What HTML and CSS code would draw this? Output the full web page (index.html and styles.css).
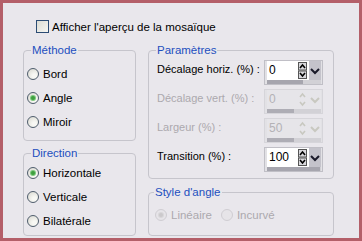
FILE: index.html
```html
<!DOCTYPE html>
<html lang="fr">
<head>
    <meta charset="UTF-8">
    <title>Mosaïque</title>
    <link rel="stylesheet" href="styles.css">
</head>
<body>

<div class="dialog">
    <!-- Preview toggle -->
    <div class="check-row">
        <span class="checkbox"></span>
        <span>Afficher l'aperçu de la mosaïque</span>
    </div>

    <div class="columns">
        <div class="col col-left">
            <fieldset class="group group-method">
                <legend>Méthode</legend>
                <div class="option"><span class="radio"></span>Bord</div>
                <div class="option"><span class="radio checked"></span>Angle</div>
                <div class="option"><span class="radio"></span>Miroir</div>
            </fieldset>

            <fieldset class="group group-direction">
                <legend>Direction</legend>
                <div class="option"><span class="radio checked"></span>Horizontale</div>
                <div class="option"><span class="radio"></span>Verticale</div>
                <div class="option"><span class="radio"></span>Bilatérale</div>
            </fieldset>
        </div>

        <div class="col col-right">
            <fieldset class="group group-params">
                <legend>Paramètres</legend>

                <div class="param-row">
                    <span class="param-label">Décalage horiz. (%) :</span>
                    <div class="spin">
                        <div class="spin-top">
                            <span class="spin-field">0</span>
                            <span class="spin-arrows"><svg width="9" height="17" viewBox="0 0 9 17"><rect x="0.5" y="0.5" width="8" height="7.5" fill="#d8d8dc" stroke="#555"/><rect x="0.5" y="9" width="8" height="7.5" fill="#d8d8dc" stroke="#555"/><path d="M2 6 L4.5 3 L7 6" fill="none" stroke="#000" stroke-width="1.6"/><path d="M2 11 L4.5 14 L7 11" fill="none" stroke="#000" stroke-width="1.6"/></svg></span>
                            <span class="spin-drop"><svg width="10" height="8" viewBox="0 0 10 8"><path d="M1 2 L5 6 L9 2" fill="none" stroke="#1a1a2a" stroke-width="2"/></svg></span>
                        </div>
                        <div class="spin-track"><span class="spin-fill" style="width: 36px"></span></div>
                    </div>
                </div>

                <div class="param-row disabled">
                    <span class="param-label">Décalage vert. (%) :</span>
                    <div class="spin">
                        <div class="spin-top">
                            <span class="spin-field">0</span>
                            <span class="spin-arrows"><svg width="9" height="17" viewBox="0 0 9 17"><path d="M2 6 L4.5 3 L7 6" fill="none" stroke="#c8c8c0" stroke-width="1.6"/><path d="M2 11 L4.5 14 L7 11" fill="none" stroke="#c8c8c0" stroke-width="1.6"/></svg></span>
                            <span class="spin-drop"><svg width="10" height="8" viewBox="0 0 10 8"><path d="M1 2 L5 6 L9 2" fill="none" stroke="#c8c8c0" stroke-width="2"/></svg></span>
                        </div>
                        <div class="spin-track"><span class="spin-fill" style="width: 27px"></span></div>
                    </div>
                </div>

                <div class="param-row disabled">
                    <span class="param-label">Largeur (%) :</span>
                    <div class="spin">
                        <div class="spin-top">
                            <span class="spin-field">50</span>
                            <span class="spin-arrows"><svg width="9" height="17" viewBox="0 0 9 17"><path d="M2 6 L4.5 3 L7 6" fill="none" stroke="#c8c8c0" stroke-width="1.6"/><path d="M2 11 L4.5 14 L7 11" fill="none" stroke="#c8c8c0" stroke-width="1.6"/></svg></span>
                            <span class="spin-drop"><svg width="10" height="8" viewBox="0 0 10 8"><path d="M1 2 L5 6 L9 2" fill="none" stroke="#c8c8c0" stroke-width="2"/></svg></span>
                        </div>
                        <div class="spin-track"><span class="spin-fill" style="width: 27px"></span></div>
                    </div>
                </div>

                <div class="param-row">
                    <span class="param-label">Transition (%) :</span>
                    <div class="spin">
                        <div class="spin-top">
                            <span class="spin-field">100</span>
                            <span class="spin-arrows"><svg width="9" height="17" viewBox="0 0 9 17"><rect x="0.5" y="0.5" width="8" height="7.5" fill="#d8d8dc" stroke="#555"/><rect x="0.5" y="9" width="8" height="7.5" fill="#d8d8dc" stroke="#555"/><path d="M2 6 L4.5 3 L7 6" fill="none" stroke="#000" stroke-width="1.6"/><path d="M2 11 L4.5 14 L7 11" fill="none" stroke="#000" stroke-width="1.6"/></svg></span>
                            <span class="spin-drop"><svg width="10" height="8" viewBox="0 0 10 8"><path d="M1 2 L5 6 L9 2" fill="none" stroke="#1a1a2a" stroke-width="2"/></svg></span>
                        </div>
                        <div class="spin-track"><span class="spin-fill" style="width: 53px"></span></div>
                    </div>
                </div>
            </fieldset>

            <fieldset class="group group-style">
                <legend>Style d'angle</legend>
                <div class="style-row">
                    <div class="option disabled"><span class="radio checked"></span>Linéaire</div>
                    <div class="option disabled"><span class="radio"></span>Incurvé</div>
                </div>
            </fieldset>
        </div>
    </div>
</div>

</body>
</html>
```

FILE: styles.css
```css
* {
    margin: 0;
    padding: 0;
    box-sizing: border-box;
}

body {
    font-family: 'Liberation Sans', Arial, sans-serif;
    font-size: 11px;
    color: #000;
    background-color: #b45f69;
}

.dialog {
    width: 362px;
    height: 241px;
    border: 3px solid #b45f69;
    background-color: #e9e7ec;
    padding: 17px 0 0 20px;
}

/* Top checkbox */
.check-row {
    display: flex;
    align-items: center;
    gap: 3px;
    height: 13px;
    padding-left: 13px;
    margin-bottom: 10px;
    font-size: 11.5px;
}

.checkbox {
    width: 13px;
    height: 13px;
    border: 1px solid #2c4c74;
    background: linear-gradient(135deg, #dcdcd4, #f6f6f2);
}

/* Two columns */
.columns {
    display: flex;
    gap: 12px;
}

.col {
    display: flex;
    flex-direction: column;
}

.col-left {
    width: 113px;
    gap: 5px;
}

.col-right {
    width: 186px;
    gap: 6px;
}

/* Group boxes */
.group {
    border: 1px solid #c6c5cc;
    border-radius: 4px;
    min-width: 0;
}

.group legend {
    color: #1d4fbf;
    line-height: 14px;
    padding: 0 1px;
    font-size: 11.5px;
}

.group-method {
    height: 98px;
    padding: 5px 3px 0 3px;
}

.group-method legend,
.group-direction legend {
    margin-left: 4px;
}

.group-direction {
    height: 90px;
    padding: 1px 3px 0 3px;
}

.group-params {
    height: 136px;
    padding: 3px 10px 0 8px;
}

.group-params legend,
.group-style legend {
    margin-left: -1px;
}

.group-style {
    height: 51px;
    padding: 4px 6px 0 6px;
}

/* Radio options */
.option {
    display: flex;
    align-items: center;
    gap: 4px;
    height: 24px;
    font-size: 11.5px;
    white-space: nowrap;
}

.radio {
    flex-shrink: 0;
    width: 12px;
    height: 12px;
    border-radius: 50%;
    border: 1px solid #4f5d6c;
    background: radial-gradient(circle at 65% 70%, #f8f8f4 20%, #d6d6ce 100%);
    display: flex;
    align-items: center;
    justify-content: center;
}

.radio.checked::after {
    content: '';
    width: 4px;
    height: 4px;
    border-radius: 50%;
    background-color: #3f9f3f;
    box-shadow: 0 0 0 1px #7cc87c;
}

.option.disabled {
    color: #aca9ae;
}

.option.disabled .radio {
    border-color: #cfcdd2;
    background: #e6e4e8;
}

.option.disabled .radio.checked::after {
    background-color: #cbc9cc;
    box-shadow: 0 0 0 1px #d8d6d9;
}

.style-row {
    display: flex;
    gap: 9px;
}

/* Parameter rows */
.param-row {
    display: flex;
    justify-content: space-between;
    align-items: flex-start;
    height: 29px;
}

.param-label {
    line-height: 19px;
    white-space: nowrap;
}

.param-row.disabled .param-label {
    color: #aca9ae;
}

.spin {
    flex-shrink: 0;
    width: 59px;
    height: 25px;
    border: 1px solid #c0bfc6;
    background-color: #e2e1e5;
    padding: 0 1px 0 2px;
}

.spin-top {
    display: flex;
    height: 19px;
    background-color: #fff;
}

.spin-field {
    width: 31px;
    line-height: 19px;
    padding-left: 2px;
    font-size: 12px;
}

.spin-arrows {
    width: 11px;
    display: flex;
    align-items: center;
}

.spin-drop {
    flex: 1;
    background-color: #c4c3cb;
    display: flex;
    align-items: center;
    justify-content: center;
}

.spin-track {
    height: 4px;
    background-color: #d2d1d6;
}

.spin-fill {
    display: block;
    height: 100%;
    background-color: #a6a5ae;
}

.param-row.disabled .spin {
    border-color: #d6d5da;
}

.param-row.disabled .spin-top,
.param-row.disabled .spin-drop {
    background-color: #e6e5e9;
}

.param-row.disabled .spin-field {
    color: #b4b2b6;
}

.param-row.disabled .spin-fill {
    background-color: #aeadb5;
}
```
